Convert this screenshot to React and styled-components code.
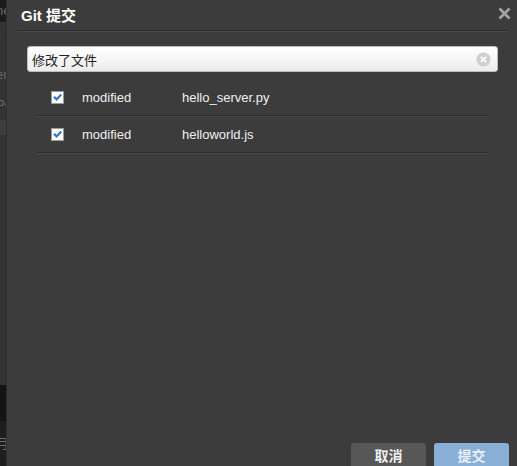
import React from 'react';
import styled, { createGlobalStyle } from 'styled-components';

const Global = createGlobalStyle`
  html, body { margin: 0; padding: 0; background: #2a2a2a; }
  body { font-family: "Liberation Sans", Arial, "Noto Sans CJK SC", sans-serif; }
`;

const Page = styled.div`
  display: flex;
  width: 517px;
  height: 466px;
  overflow: hidden;
`;

const Backdrop = styled.div`
  width: 7px;
  flex: none;
  display: flex;
  flex-direction: column;
  overflow: hidden;
  font-size: 13px;
  color: #6a6a6a;
`;

const Band = styled.div`
  height: ${p => p.h}px;
  background: ${p => p.bg};
  line-height: ${p => p.h}px;
  white-space: nowrap;
  text-indent: -4px;
`;

const Dialog = styled.div`
  flex: 1;
  display: flex;
  flex-direction: column;
  background: #3c3c3c;
  box-shadow: -1px 0 0 #2e2e2e;
`;

const Header = styled.div`
  height: 30px;
  margin: 0 8px 0 10px;
  padding-left: 4px;
  display: flex;
  align-items: center;
  border-bottom: 1px solid #2b2b2b;
  box-shadow: 0 1px 0 #484848;
`;

const Title = styled.div`
  font-size: 15px;
  font-weight: bold;
  color: #fff;
  flex: 1;
  margin-top: -1px;
`;

const Close = styled.div`
  display: flex;
  margin-right: -2px;
  margin-top: -3px;
`;

const CloseIcon = () => (
  <svg width="13" height="13" viewBox="0 0 13 13">
    <path d="M1.5 1.5 L11.5 11.5 M11.5 1.5 L1.5 11.5" stroke="#a3a3a3" strokeWidth="2.8" />
  </svg>
);

const SearchBox = styled.div`
  margin: 15px 19px 0 20px;
  height: 26px;
  box-sizing: border-box;
  border: 1px solid #bdbdbd;
  border-radius: 3px;
  background: linear-gradient(#ffffff, #ececec);
  display: flex;
  align-items: center;
  padding: 0 6px 0 4px;
`;

const SearchText = styled.div`
  flex: 1;
  font-size: 13px;
  color: #222;
  font-family: "Noto Sans CJK SC", sans-serif;
`;

const ClearIcon = () => (
  <svg width="15" height="15" viewBox="0 0 15 15">
    <circle cx="7.5" cy="7.5" r="7" fill="#cfcfcf" />
    <path d="M4.8 4.8 L10.2 10.2 M10.2 4.8 L4.8 10.2" stroke="#fff" strokeWidth="1.8" />
  </svg>
);

const Table = styled.div`
  margin: 7px 28px 0 30px;
`;

const Row = styled.div`
  height: 36px;
  display: flex;
  align-items: center;
  border-bottom: 1px solid #2c2c2c;
  box-shadow: 0 1px 0 #464646;
  font-size: 13px;
  color: #f0f0f0;
  padding-left: 14px;
`;

const Check = styled.div`
  width: 11px;
  height: 11px;
  border: 1px solid #9a9a9a;
  background: #fff;
  display: flex;
  align-items: center;
  justify-content: center;
  margin-right: 18px;
`;

const Status = styled.div`
  width: 100px;
`;

const Footer = styled.div`
  margin-top: auto;
  display: flex;
  justify-content: flex-end;
  gap: 8px;
  padding-right: 8px;
  height: 23px;
`;

const Button = styled.div`
  width: 75px;
  height: 30px;
  border-radius: 3px 3px 0 0;
  background: ${p => (p.primary ? '#8aafd7' : '#575757')};
  color: ${p => (p.primary ? '#e9eff7' : '#f0f0f0')};
  font-size: 14px;
  font-weight: bold;
  text-align: center;
  line-height: 24px;
  font-family: "Noto Sans CJK SC", sans-serif;
`;

const CheckMark = () => (
  <svg width="9" height="8" viewBox="0 0 9 8">
    <path d="M1 3.8 L3.6 6.4 L8.2 1.4" stroke="#2f78c4" strokeWidth="2.2" fill="none" />
  </svg>
);

const files = [
  { status: 'modified', name: 'hello_server.py' },
  { status: 'modified', name: 'helloworld.js' },
];

export default function App() {
  return (
    <Page>
      <Global />
      <Backdrop>
        <Band h={22} bg="#1b1b1b">ne</Band>
        <Band h={38} bg="#333">r</Band>
        <Band h={30} bg="#333">er</Band>
        <Band h={30} bg="#333">PC</Band>
        <Band h={15} bg="#3d3d3d" />
        <Band h={250} bg="#333" />
        <Band h={36} bg="#141414" />
        <Band h={45} bg="#1e1e1e">月.</Band>
      </Backdrop>
      <Dialog>
        <Header>
          <Title>Git 提交</Title>
          <Close><CloseIcon /></Close>
        </Header>
        <SearchBox>
          <SearchText>修改了文件</SearchText>
          <ClearIcon />
        </SearchBox>
        <Table>
          {files.map((f, i) => (
            <Row key={i}>
              <Check><CheckMark /></Check>
              <Status>{f.status}</Status>
              <div>{f.name}</div>
            </Row>
          ))}
        </Table>
        <Footer>
          <Button>取消</Button>
          <Button primary>提交</Button>
        </Footer>
      </Dialog>
    </Page>
  );
}
